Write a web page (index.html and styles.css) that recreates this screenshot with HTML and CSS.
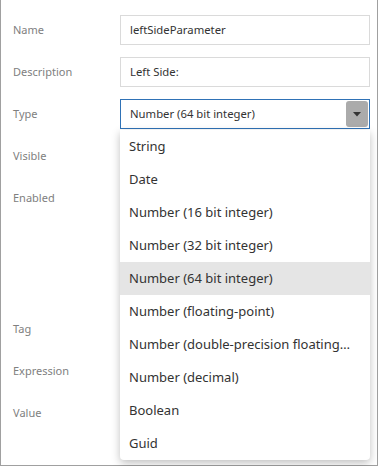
FILE: index.html
```html
<!DOCTYPE html>
<html lang="en">
<head>
    <meta charset="UTF-8">
    <meta name="viewport" content="width=device-width, initial-scale=1.0">
    <title>Parameter</title>
    <link rel="stylesheet" href="styles.css">
</head>
<body>
    <div class="painel">
        <div class="linha">
            <div class="rotulo">Name</div>
            <div class="campo"><div class="caixa">leftSideParameter</div></div>
        </div>
        <div class="linha">
            <div class="rotulo">Description</div>
            <div class="campo"><div class="caixa">Left Side:</div></div>
        </div>
        <div class="linha">
            <div class="rotulo">Type</div>
            <div class="campo">
                <div class="caixa selecao">
                    <span>Number (64 bit integer)</span>
                    <span class="seta"><svg width="8" height="5" viewBox="0 0 8 5"><path d="M0 0h8L4 4.5z" fill="#333"/></svg></span>
                </div>
                <ul class="lista">
                    <li>String</li>
                    <li>Date</li>
                    <li>Number (16 bit integer)</li>
                    <li>Number (32 bit integer)</li>
                    <li class="ativo">Number (64 bit integer)</li>
                    <li>Number (floating-point)</li>
                    <li title="Number (double-precision floating-point)">Number (double-precision floating…</li>
                    <li>Number (decimal)</li>
                    <li>Boolean</li>
                    <li>Guid</li>
                </ul>
            </div>
        </div>
        <div class="linha">
            <div class="rotulo">Visible</div>
            <div class="campo"></div>
        </div>
        <div class="linha alta">
            <div class="rotulo">Enabled</div>
            <div class="campo"></div>
        </div>
        <div class="linha">
            <div class="rotulo">Tag</div>
            <div class="campo"></div>
        </div>
        <div class="linha">
            <div class="rotulo">Expression</div>
            <div class="campo"></div>
        </div>
        <div class="linha">
            <div class="rotulo">Value</div>
            <div class="campo"></div>
        </div>
    </div>
</body>
</html>
```

FILE: styles.css
```css
/* Estilos gerais */
body {
    margin: 0;
    background: #fff;
    font-family: 'Noto Sans', 'Open Sans', sans-serif;
    color: #333;
}

.painel {
    box-sizing: border-box;
    width: 378px;
    height: 466px;
    border: 1px solid #a0a0a0;
    border-top: none;
    padding: 15px 7px 0 12px;
    display: flex;
    flex-direction: column;
    gap: 12px;
}

.linha {
    display: grid;
    grid-template-columns: 107px 1fr;
    height: 30px;
}

.linha.alta {
    height: 119px;
}

.rotulo {
    font-size: 11px;
    color: #808080;
    line-height: 30px;
}

.campo {
    position: relative;
}

.caixa {
    box-sizing: border-box;
    height: 30px;
    border: 1px solid #dadada;
    padding: 0 9px;
    font-size: 11.3px;
    line-height: 28px;
    white-space: nowrap;
}

.selecao {
    border-color: #2f72b6;
    display: flex;
    justify-content: space-between;
    align-items: center;
    padding-right: 1px;
}

.seta {
    width: 22px;
    height: 26px;
    background: #ababab;
    border-radius: 3px;
    display: flex;
    align-items: center;
    justify-content: center;
}

.lista {
    position: absolute;
    top: 31px;
    left: 0;
    width: 250px;
    margin: 0;
    padding: 0;
    list-style: none;
    background: #fff;
    border-radius: 0 0 4px 4px;
    box-shadow: 0 3px 8px rgba(0, 0, 0, 0.25);
    z-index: 2;
}

.lista li {
    height: 33px;
    line-height: 33px;
    padding: 0 9px;
    font-size: 13px;
    white-space: nowrap;
}

.lista li.ativo {
    background: #e5e5e5;
}
```
